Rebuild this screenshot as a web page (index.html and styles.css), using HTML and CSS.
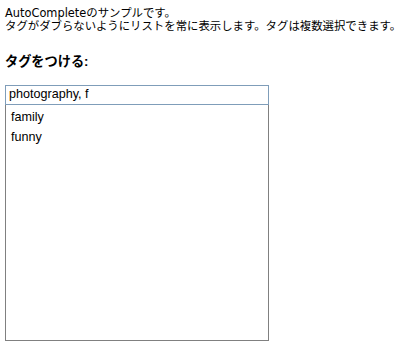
FILE: index.html
```html
<!DOCTYPE html>
<html lang="ja">
<head>
<meta charset="utf-8">
<link rel="stylesheet" href="styles.css">
</head>
<body>
<p class="intro">AutoCompleteのサンプルです。<br>タグがダブらないようにリストを常に表示します。タグは複数選択できます。</p>
<h3 class="label">タグをつける:</h3>
<div class="ac">
  <div class="ac-input">photography, f</div>
  <ul class="ac-list">
    <li>family</li>
    <li>funny</li>
  </ul>
</div>
</body>
</html>
```
FILE: styles.css
```css
html, body {
  margin: 0;
  padding: 0;
  background: #fff;
}
body {
  padding: 7px 5px 0;
  font-family: "Liberation Sans", "Noto Sans CJK JP", sans-serif;
  font-size: 12px;
  color: #000;
}
.intro {
  margin: 0;
  line-height: 13px;
  font-family: "DejaVu Sans", "Noto Sans CJK JP", sans-serif;
  font-size: 11.4px;
}
.label {
  margin: 21px 0 0;
  font-size: 13.2px;
  line-height: 16px;
  font-weight: bold;
}
.ac {
  margin-top: 15px;
  width: 264px;
}
.ac-input {
  box-sizing: border-box;
  height: 20px;
  border: 1px solid #7f9db9;
  padding: 0 3px;
  line-height: 17px;
  font-size: 12.6px;
}
.ac-list {
  box-sizing: border-box;
  list-style: none;
  margin: 0;
  padding: 2px 0 0 5px;
  height: 236px;
  border: 1px solid #808080;
  border-top: 0;
}
.ac-list li {
  line-height: 20px;
  font-size: 12.6px;
}
```
